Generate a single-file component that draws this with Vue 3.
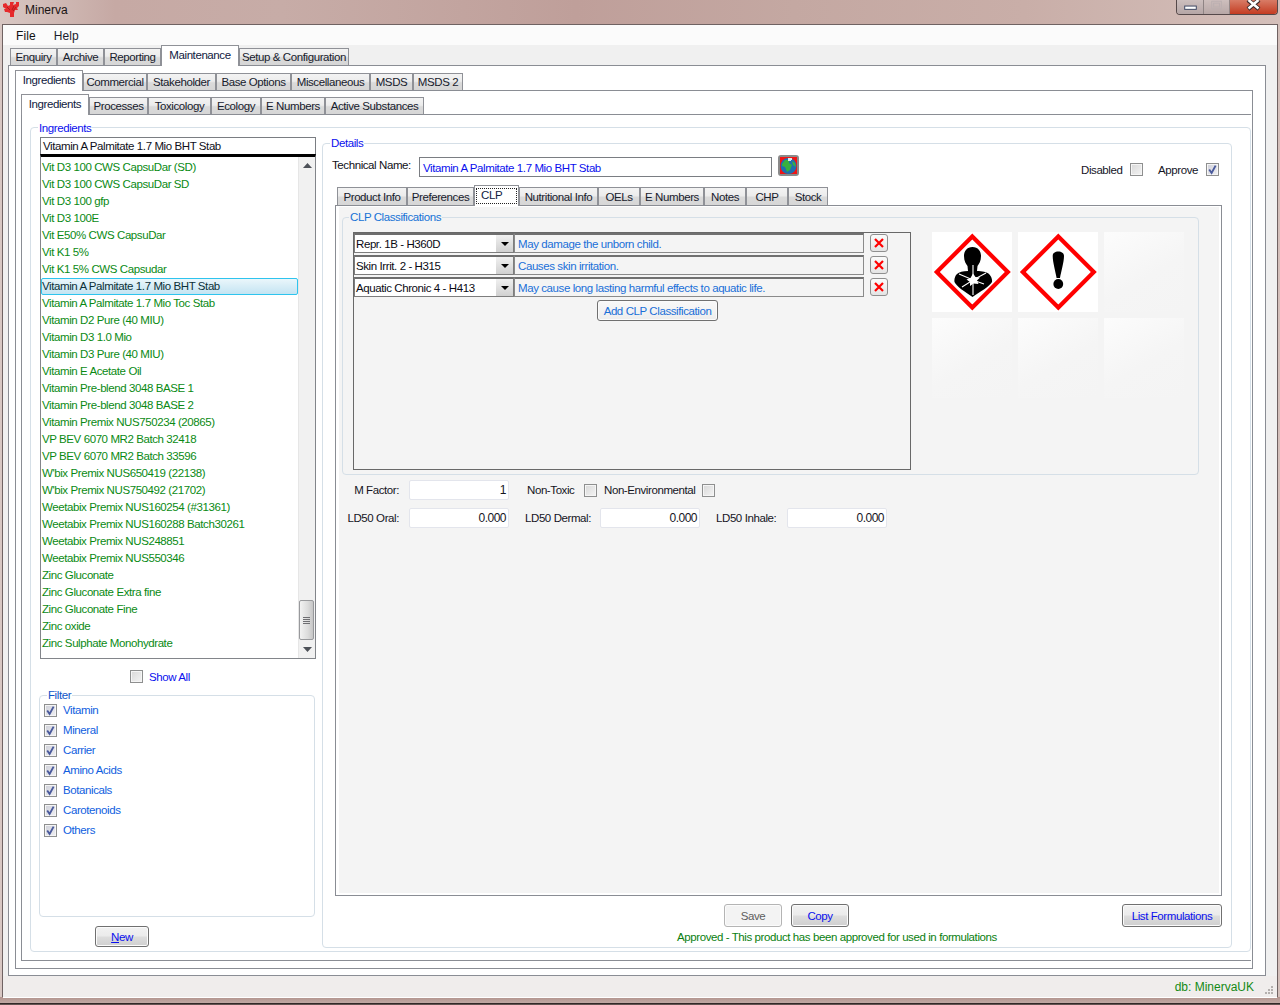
<script setup>
const topTabs = [
  { t: 'Enquiry', w: 47 }, { t: 'Archive', w: 47 }, { t: 'Reporting', w: 57 },
  { t: 'Maintenance', w: 78, on: true }, { t: 'Setup & Configuration', w: 110 }
]
const midTabs = [
  { t: 'Ingredients', w: 68, on: true }, { t: 'Commercial', w: 64 }, { t: 'Stakeholder', w: 69 },
  { t: 'Base Options', w: 75 }, { t: 'Miscellaneous', w: 79 }, { t: 'MSDS', w: 43 }, { t: 'MSDS 2', w: 50 }
]
const subTabs = [
  { t: 'Ingredients', w: 68, on: true }, { t: 'Processes', w: 59 }, { t: 'Toxicology', w: 63 },
  { t: 'Ecology', w: 50 }, { t: 'E Numbers', w: 64 }, { t: 'Active Substances', w: 99 }
]
const detailTabs = [
  { t: 'Product Info', w: 70 }, { t: 'Preferences', w: 67 }, { t: 'CLP', w: 45, on: true, focus: true },
  { t: 'Nutritional Info', w: 79 }, { t: 'OELs', w: 42 }, { t: 'E Numbers', w: 64 },
  { t: 'Notes', w: 42 }, { t: 'CHP', w: 42 }, { t: 'Stock', w: 40 }
]
const items = [
  'Vit D3 100 CWS CapsuDar (SD)', 'Vit D3 100 CWS CapsuDar SD', 'Vit D3 100 gfp', 'Vit D3 100E',
  'Vit E50% CWS CapsuDar', 'Vit K1 5%', 'Vit K1 5% CWS Capsudar', 'Vitamin A Palmitate 1.7 Mio BHT Stab',
  'Vitamin A Palmitate 1.7 Mio Toc Stab', 'Vitamin D2 Pure (40 MIU)', 'Vitamin D3 1.0 Mio', 'Vitamin D3 Pure (40 MIU)',
  'Vitamin E Acetate Oil', 'Vitamin Pre-blend 3048 BASE 1', 'Vitamin Pre-blend 3048 BASE 2',
  'Vitamin Premix NUS750234 (20865)', 'VP BEV 6070 MR2 Batch 32418', 'VP BEV 6070 MR2 Batch 33596',
  "W'bix Premix NUS650419 (22138)", "W'bix Premix NUS750492 (21702)", 'Weetabix Premix NUS160254 (#31361)',
  'Weetabix Premix NUS160288 Batch30261', 'Weetabix Premix NUS248851', 'Weetabix Premix NUS550346',
  'Zinc Gluconate', 'Zinc Gluconate Extra fine', 'Zinc Gluconate Fine', 'Zinc oxide', 'Zinc Sulphate Monohydrate'
]
const selectedItem = 'Vitamin A Palmitate 1.7 Mio BHT Stab'
const filters = ['Vitamin', 'Mineral', 'Carrier', 'Amino Acids', 'Botanicals', 'Carotenoids', 'Others']
const clp = [
  { c: 'Repr. 1B - H360D', d: 'May damage the unborn child.' },
  { c: 'Skin Irrit. 2 - H315', d: 'Causes skin irritation.' },
  { c: 'Aquatic Chronic 4 - H413', d: 'May cause long lasting harmful effects to aquatic life.' }
]
</script>

<template>
  <div class="screen">
    <header class="titlebar">
      <svg class="logo" viewBox="0 0 17 17" width="17" height="17">
        <path d="M1 3 L4 2 L6 5 L8 4 L8 1 L12 1 L11 4 L14 3 L14 1 L17 1 L17 5 L15 7 L16 9 L13 9 L12 12 L12 16 L8 16 L8 12 L5 11 L3 11 L2 8 L4 8 L1 6 Z" fill="#e62a2c" />
        <path d="M5 6 L8 9 M12 5 L10 9 M14 6 L11 10" stroke="#b01a1e" stroke-width="1" fill="none" />
      </svg>
      <span class="title">Minerva</span>
      <div class="controls">
        <span class="ctl">
          <svg viewBox="0 0 28 15" width="27" height="15"><rect x="8" y="6" width="12" height="3.4" fill="#fff" stroke="#3a4460" stroke-width="1" /></svg>
        </span>
        <span class="ctl ctl-max">
          <svg viewBox="0 0 27 15" width="26" height="15"><rect x="8" y="1" width="10" height="8" fill="none" stroke="#b9aeb0" stroke-width="1" /><rect x="10" y="3" width="6" height="4" fill="none" stroke="#b9aeb0" stroke-width="1" /></svg>
        </span>
        <span class="ctl ctl-close">
          <svg viewBox="0 0 47 15" width="47" height="15"><path d="M18 0 L29 9 M29 0 L18 9" stroke="#3a2a2a" stroke-width="4.4" /><path d="M18.5 0 L28.5 8.5 M28.5 0 L18.5 8.5" stroke="#fff" stroke-width="2.6" /></svg>
        </span>
      </div>
    </header>

    <div class="window">
      <nav class="menu"><span class="menu-item">File</span><span class="menu-item">Help</span></nav>

      <div class="tabs tabs-top">
        <div v-for="tab in topTabs" :key="tab.t" class="tab" :class="{ on: tab.on }" :style="{ width: tab.w + 'px' }">{{ tab.t }}</div>
      </div>
      <div class="panel panel-1">
        <div class="tabs">
          <div v-for="tab in midTabs" :key="tab.t" class="tab" :class="{ on: tab.on }" :style="{ width: tab.w + 'px' }">{{ tab.t }}</div>
        </div>
        <div class="panel panel-2">
          <div class="tabs">
            <div v-for="tab in subTabs" :key="tab.t" class="tab" :class="{ on: tab.on }" :style="{ width: tab.w + 'px' }">{{ tab.t }}</div>
          </div>
          <div class="panel panel-3">
            <section class="group ingredients">
              <span class="legend legend-blue legend-ing">Ingredients</span>

              <div class="left">
                <div class="search">Vitamin A Palmitate 1.7 Mio BHT Stab</div>
                <div class="list">
                  <div class="items">
                    <div v-for="item in items" :key="item" class="item" :class="{ sel: item === selectedItem }">{{ item }}</div>
                  </div>
                  <div class="scrollbar">
                    <span class="sb-btn"><svg viewBox="0 0 9 5" width="9" height="5"><path d="M0 5 L4.5 0 L9 5 Z" fill="#4d5158" /></svg></span>
                    <span class="sb-track">
                      <span class="sb-thumb"><i></i><i></i><i></i><i></i></span>
                    </span>
                    <span class="sb-btn"><svg viewBox="0 0 9 5" width="9" height="5"><path d="M0 0 L4.5 5 L9 0 Z" fill="#4d5158" /></svg></span>
                  </div>
                </div>

                <div class="show-all">
                  <span class="cb"></span>
                  <span class="show-label">Show All</span>
                </div>

                <section class="group filter">
                  <span class="legend legend-mid">Filter</span>
                  <label v-for="f in filters" :key="f" class="filter-row">
                    <span class="cb cb-on"><svg viewBox="0 0 11 11" width="11" height="11"><path d="M2.2 5.5 L4.6 9 L8.6 1.6" fill="none" stroke="#4a5a9c" stroke-width="1.9" /></svg></span>
                    <span class="filter-label">{{ f }}</span>
                  </label>
                </section>

                <button class="btn btn-new"><u>N</u>ew</button>
              </div>

              <section class="group details">
                <span class="legend legend-blue legend-details">Details</span>

                <div class="name-row">
                  <span class="name-label">Technical Name:</span>
                  <div class="name-input">Vitamin A Palmitate 1.7 Mio BHT Stab</div>
                  <span class="globe">
                    <svg viewBox="0 0 17 17" width="17" height="17">
                      <rect width="17" height="17" fill="#f01414" />
                      <circle cx="8.5" cy="9" r="8" fill="#1d6fb0" />
                      <path d="M2 7 L5 3 L9 3 L9 6 L12 8 L10 13 L7 15 L5 10 L2 9 Z" fill="#37b040" />
                      <path d="M12 4 L15 6 L16 10 L13 8 Z" fill="#37b040" />
                      <path d="M8 1 h4 v2 h-1 v1 h-3 Z" fill="#dbe8ea" />
                    </svg>
                  </span>
                  <span class="state-label state-disabled">Disabled</span>
                  <span class="cb state-cb"></span>
                  <span class="state-label state-approve">Approve</span>
                  <span class="cb cb-on state-cb state-cb-last"><svg viewBox="0 0 11 11" width="11" height="11"><path d="M2.2 5.5 L4.6 9 L8.6 1.6" fill="none" stroke="#4a5a9c" stroke-width="1.9" /></svg></span>
                </div>

                <div class="tabs tabs-detail">
                  <div v-for="tab in detailTabs" :key="tab.t" class="tab tab-low" :class="{ on: tab.on }" :style="{ width: tab.w + 'px' }">
                    <span :class="{ focus: tab.focus }">{{ tab.t }}</span>
                  </div>
                </div>

                <div class="panel panel-4">
                  <div class="fill">
                    <section class="group clp">
                      <span class="legend legend-clp">CLP Classifications</span>
                      <div class="clp-box">
                        <div v-for="row in clp" :key="row.c" class="clp-row">
                          <div class="combo">
                            <span class="combo-text">{{ row.c }}</span>
                            <span class="combo-arrow"><svg viewBox="0 0 8 4" width="8" height="4"><path d="M0 0 L8 0 L4 4 Z" fill="#000" /></svg></span>
                          </div>
                          <div class="desc">{{ row.d }}</div>
                          <span class="x-btn">
                            <svg viewBox="0 0 10 10" width="10" height="10"><path d="M1 1 L9 9 M9 1 L1 9" stroke="#f00" stroke-width="2.2" /></svg>
                          </span>
                        </div>
                        <button class="btn btn-add">Add CLP Classification</button>
                      </div>
                      <div class="pictos">
                        <div class="picto">
                          <svg viewBox="0 0 80 80" width="80" height="80">
                            <path d="M40.3 4.5 L75.8 40 L40.3 75.5 L4.8 40 Z" fill="#fff" stroke="#f00" stroke-width="4.2" />
                            <path d="M40.5 15 C35 15 32 19 32 24 C32 29 34 32 35.5 34 L36 39 C31 39 27 40 25 42 C23 44 22 47 22.5 50 C24 54 33 60 40.5 65 C48 60 58 54 60 50 C60.5 47 59 44 57 42 C55 40 50 39 45 39 L45.5 34 C47 32 49 29 49 24 C49 19 46 15 40.5 15 Z" fill="#000" />
                            <path d="M41 33 L41 63 M27 42 L41 48 L54 41 M30 55 L41 48 L52 52" fill="none" stroke="#fff" stroke-width="1.1" />
                            <path d="M41 41.5 L43.5 45 L48 45.5 L45 48.5 L46.5 52 L41.5 51.5 L38 54 L38 50 L34.5 47.5 L38.5 46 Z" fill="#fff" />
                          </svg>
                        </div>
                        <div class="picto">
                          <svg viewBox="0 0 80 80" width="80" height="80">
                            <path d="M40.3 4.5 L75.8 40 L40.3 75.5 L4.8 40 Z" fill="#fff" stroke="#f00" stroke-width="4.2" />
                            <path d="M40.3 19.5 C43.5 19.5 46 21 46 24 C46 30 43 40 42 46 L38.6 46 C37.6 40 34.7 30 34.7 24 C34.7 21 37 19.5 40.3 19.5 Z" fill="#000" />
                            <circle cx="40.3" cy="52" r="4.9" fill="#000" />
                          </svg>
                        </div>
                        <div class="picto picto-empty"></div>
                        <div class="picto picto-empty"></div>
                        <div class="picto picto-empty"></div>
                        <div class="picto picto-empty"></div>
                      </div>
                    </section>

                    <div class="fields fields-1">
                      <span class="f-label">M Factor:</span>
                      <div class="num">1</div>
                      <span class="f-text f-nontoxic">Non-Toxic</span>
                      <span class="cb"></span>
                      <span class="f-text f-nonenv">Non-Environmental</span>
                      <span class="cb"></span>
                    </div>
                    <div class="fields fields-2">
                      <span class="f-label">LD50 Oral:</span>
                      <div class="num">0.000</div>
                      <span class="f-text f-dermal">LD50 Dermal:</span>
                      <div class="num">0.000</div>
                      <span class="f-text f-inhale">LD50 Inhale:</span>
                      <div class="num">0.000</div>
                    </div>
                  </div>
                </div>

                <div class="actions">
                  <button class="btn btn-save" disabled>Save</button>
                  <button class="btn btn-copy">Copy</button>
                  <button class="btn btn-list">List Formulations</button>
                </div>
                <p class="approved">Approved - This product has been approved for used in formulations</p>
              </section>
            </section>
          </div>
        </div>
      </div>

      <footer class="status">
        <span class="db">db: MinervaUK</span>
        <svg class="grip" viewBox="0 0 10 10" width="10" height="10">
          <path d="M7 1h2v2H7zM4 4h2v2H4zM7 4h2v2H7zM1 7h2v2H1zM4 7h2v2H4zM7 7h2v2H7z" fill="#b4b0ae" />
        </svg>
      </footer>
    </div>
    <div class="frame-bottom"></div>
  </div>
</template>

<style>
html, body { margin: 0; padding: 0; }
</style>

<style scoped>
* { box-sizing: border-box; }
.screen {
  width: 1280px; height: 1005px; overflow: hidden;
  background: linear-gradient(90deg, #d8c7c3 0, #c6a9a4 9%, #c7aca7 22%, #bf9f9a 45%, #c4a8a2 62%, #c9aea8 80%, #d4bfba 100%);
  font: 11.5px "Liberation Sans", Arial, sans-serif;
  letter-spacing: -0.41px;
  color: #111;
  display: flex; flex-direction: column;
}
.titlebar { height: 24px; flex: none; display: flex; align-items: flex-start; }
.logo { margin: 1px 0 0 2px; }
.title { margin: 3px 0 0 6px; font-size: 12px; letter-spacing: 0; color: #1a1414; line-height: 15px; }
.controls {
  margin-left: auto; margin-right: 2px; display: flex; height: 15px;
  border: 1px solid #55494a; border-top: 0; border-radius: 0 0 4px 4px; overflow: hidden;
}
.ctl { width: 27px; height: 14px; border-right: 1px solid #8f8484; background: linear-gradient(#cdbfbe, #b5a6a6); overflow: hidden; }
.ctl svg { display: block; }
.ctl-max { width: 26px; opacity: .92; }
.ctl-close { width: 47px; border-right: 0; background: linear-gradient(#d87c66, #c43c22); }

.window {
  height: 973px; flex: none; margin: 0 2px;
  border: 1px solid #6f6262; border-bottom: 0; background: #f0f0f0;
  display: flex; flex-direction: column;
}
.menu { height: 20px; flex: none; background: #fbfbfb; display: flex; align-items: center; padding: 2px 0 0 13px; font-size: 12px; letter-spacing: 0.1px; }
.menu-item { margin-right: 18px; }
.menu-item + .menu-item { color: #1c1c2c; }

.tabs { height: 20px; display: flex; align-items: flex-end; flex: none; position: relative; z-index: 1; }
.tabs-top { margin-left: 7px; }
.tab {
  height: 17px; flex: none; padding-top: 1px; text-align: center; line-height: 15px; white-space: nowrap;
  border: 1px solid #8f9197; border-bottom: 0;
  background: linear-gradient(#f3f3f3 0, #ececec 45%, #dadada 55%, #d6d6d6 100%);
  color: #17202c;
}
.tab.on {
  height: 21px; margin-bottom: -1px; background: #fff; padding-top: 2px; color: #102040;
}
.panel { border: 1px solid #8a8d94; background: #fff; }
.panel-1 { margin-left: 5px; width: 1258px; height: 911px; padding: 4px 0 0 6px; flex: none; }
.panel-2 { width: 1238px; height: 879px; padding: 3px 0 0 5px; }
.panel-3 { width: 1230px; height: 847px; padding: 12px 0 0 8px; border-right: 0; }

.group { border: 1px solid #d5dfe7; border-radius: 4px; position: relative; }
.legend { position: absolute; top: -7px; left: 7px; padding: 0 1px; background: #fff; line-height: 13px; white-space: nowrap; }
.legend-ing { top: -6px; }
.legend-blue { color: #0a10ee; }
.legend-mid { color: #0f55c8; }
.legend-clp { left: 6px; color: #1672d6; background: #f4f4f4; }

.ingredients { width: 1221px; height: 825px; padding: 9px 0 0 9px; display: flex; align-items: flex-start; }
.left { width: 276px; flex: none; }
.search {
  height: 17px; border: 1px solid #7a7d82; border-bottom: 0; background: #fff;
  padding-left: 2px; line-height: 17px; color: #10101a; white-space: nowrap;
}
.list {
  height: 505px; border: 1px solid #82858a; border-top: 3px solid #000; background: #fff;
  display: flex;
}
.items { flex: 1; padding: 2px 0 0 0; overflow: hidden; }
.item { height: 17px; line-height: 16px; padding-left: 1px; color: #0a8a14; white-space: nowrap; }
.item.sel {
  color: #0c3038; border: 1px solid #2ec4ee; border-radius: 2px;
  background: linear-gradient(#eaf6fb, #c4e4f2); padding-left: 0; line-height: 15px;
}
.scrollbar { width: 17px; flex: none; display: flex; flex-direction: column; background: #f1f1f1; border-left: 1px solid #e6e6e6; }
.sb-btn { height: 17px; flex: none; display: flex; align-items: center; justify-content: center; }
.sb-track { flex: 1; display: flex; flex-direction: column; justify-content: flex-end; padding-bottom: 1px; }
.sb-thumb {
  width: 15px; height: 40px; margin-left: 0; border: 1px solid #98999c; border-radius: 2px;
  background: linear-gradient(90deg, #f2f2f2, #dcdcdc 60%, #c6c6c6);
  display: flex; flex-direction: column; align-items: center; justify-content: center; gap: 1px;
}
.sb-thumb i { display: block; width: 7px; height: 1px; background: #6e6e72; }

.show-all { margin: 11px 0 0 90px; display: flex; align-items: center; height: 13px; }
.show-label { margin-left: 6px; color: #0a10ee; }

.cb {
  width: 13px; height: 13px; flex: none; display: block; border: 1px solid #8e8f8f;
  background: linear-gradient(135deg, #d8d8d8, #f4f4f4);
  box-shadow: inset 0 0 0 1px #f5f5f5;
}
.cb svg { display: block; margin: 0 0 0 0; }
.cb-on { background: linear-gradient(135deg, #cfd0d8, #f0f0f4); }

.filter { margin: 12px 0 0 -1px; width: 276px; height: 222px; padding: 8px 0 0 4px; }
.filter-row { height: 20px; display: flex; align-items: flex-start; }
.filter-label { margin-left: 6px; line-height: 12px; color: #0f5ee0; }

.btn {
  display: block; padding: 0; font: inherit; letter-spacing: inherit; text-align: center; color: #0a10ee;
  border: 1px solid #707070; border-radius: 3px;
  background: linear-gradient(#f2f2f2 0, #ebebeb 48%, #dddddd 52%, #cfcfcf 100%);
  box-shadow: inset 0 0 0 1px #fbfbfb;
}
.btn-new { margin: 9px 0 0 55px; width: 54px; height: 21px; }

.details { width: 910px; height: 805px; margin: 6px 0 0 6px; padding: 11px 0 0 0; flex: none; }
.name-row { display: flex; align-items: flex-start; height: 21px; padding-left: 9px; }
.name-label { width: 87px; flex: none; margin-top: 3px; line-height: 14px; color: #101018; }
.name-input {
  width: 353px; height: 20px; margin-top: 2px; flex: none; border: 1px solid #7a7d82; background: #fff;
  color: #0a10ee; padding-left: 3px; line-height: 20px; white-space: nowrap;
}
.globe {
  width: 21px; height: 21px; margin-left: 6px; flex: none; border: 2px solid #8a8a8a; border-radius: 3px;
  background: #f2f2f2; display: flex; align-items: center; justify-content: center;
}
.state-label { margin-top: 8px; line-height: 14px; white-space: nowrap; color: #14141f; flex: none; }
.state-disabled { margin-left: 282px; width: 49px; }
.state-approve { margin-left: 15px; width: 48px; }
.state-cb { margin-top: 8px; }

.tabs-detail { margin: 9px 0 0 14px; }
.tab-low { height: 18px; padding-top: 2px; }
.tab-low.on { height: 21px; padding: 2px 1px 0 1px; }
.focus { outline: 1px dotted #222; outline-offset: -1px; display: block; height: 16px; padding-left: 5px; line-height: 15px; text-align: left; }
.panel-4 { width: 887px; height: 691px; margin-left: 12px; padding: 1px 2px 2px 3px; position: relative; }
.fill { height: 100%; background: #f4f4f4; padding: 10px 0 0 3px; }

.clp { width: 857px; height: 258px; padding: 14px 0 0 10px; display: flex; align-items: flex-start; }
.clp-box { width: 558px; height: 238px; flex: none; border: 1px solid #686868; position: relative; }
.clp-row { display: flex; height: 22px; align-items: flex-start; }
.combo {
  width: 160px; height: 20px; border: 1px solid #7d7d7d; border-top: 2px solid #6e6e6e; background: #fff;
  display: flex; align-items: center; padding-left: 1px; color: #0a0a14; white-space: nowrap;
}
.combo-text { flex: 1; }
.combo-arrow { width: 17px; height: 17px; background: linear-gradient(#f0f0f0, #d0d0d0); display: flex; align-items: center; justify-content: center; }
.desc {
  width: 350px; height: 20px; border: 1px solid #8a8a8a; border-top: 2px solid #707070; background: #f4f4f4;
  color: #1a6fd8; padding: 1px 0 0 3px; line-height: 16px; white-space: nowrap;
}
.x-btn {
  width: 18px; height: 18px; margin: 1px 0 0 6px; flex: none; border: 1px solid #8f8f8f; border-radius: 3px;
  background: linear-gradient(#fbfbfb, #e4e4e4); display: flex; align-items: center; justify-content: center;
}
.btn-add { margin: 1px 0 0 243px; width: 121px; height: 21px; color: #1a6fd8; background: linear-gradient(#f9f9f9, #ededed); }

.pictos { margin-left: 21px; display: grid; grid-template-columns: repeat(3, 80px); grid-auto-rows: 80px; gap: 6px; }
.picto { background: #fff; }
.picto svg { display: block; }
.picto-empty { background: linear-gradient(150deg, #fcfcfc 0, #f5f5f5 55%, #f4f4f4 100%); }

.fields { display: flex; align-items: center; height: 20px; margin-left: -3px; }
.fields-1 { margin-top: 5px; }
.fields-2 { margin-top: 8px; }
.f-label { width: 60px; margin-right: 10px; text-align: right; flex: none; color: #15151e; }
.num {
  width: 100px; height: 20px; flex: none; background: #fff; border: 1px solid #e3e5ec; border-radius: 2px;
  text-align: right; padding-right: 2px; line-height: 19px; color: #15151e; font-size: 12px; letter-spacing: -0.5px;
}
.f-text { flex: none; color: #15151e; white-space: nowrap; }
.f-nontoxic { margin-left: 18px; width: 57px; }
.f-nonenv { margin-left: 7px; width: 98px; }
.f-dermal { margin-left: 16px; width: 75px; }
.f-inhale { margin-left: 16px; width: 71px; }

.actions { display: flex; margin: 8px 0 0 401px; height: 23px; }
.btn-save { width: 58px; height: 23px; color: #5e5e5e; border-color: #b4b4b4; background: #f3f3f3; }
.btn-copy { width: 58px; height: 23px; margin-left: 9px; }
.btn-list { width: 100px; height: 23px; margin-left: 273px; }
.approved { margin: 4px 0 0 354px; line-height: 12px; color: #0a8010; white-space: nowrap; }

.status {
  height: 22px; flex: none; background: #f0edec; border-bottom: 1px solid #fff;
  display: flex; align-items: center; justify-content: flex-end; padding-right: 3px; position: relative;
}
.db { color: #148a14; margin-right: 10px; font-size: 12px; letter-spacing: 0; }
.grip { margin-top: 6px; }
.frame-bottom { height: 8px; flex: none; background: linear-gradient(#b2938d 0, #bfa7a2 70%, #2c2424 80%, #7d6a66 100%); }
</style>
